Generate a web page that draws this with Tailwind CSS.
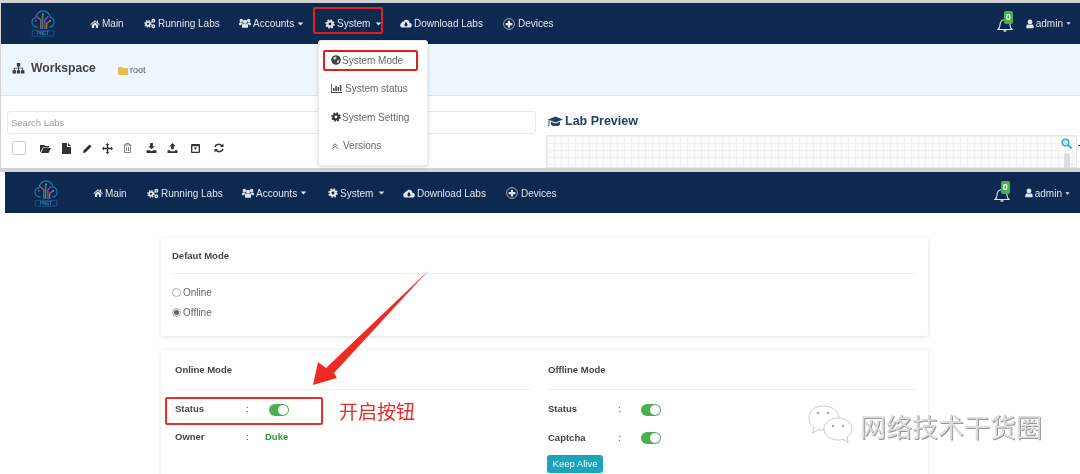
<!DOCTYPE html>
<html>
<head>
<meta charset="utf-8">
<script src="https://cdn.jsdelivr.net/npm/@tailwindcss/browser@4"></script>
</head>
<body class="m-0 bg-white">
<svg width="0" height="0" class="absolute">
  <defs>
    <symbol id="home" viewBox="0 0 16 16"><path fill="currentColor" d="M8 2 L0.500 8.500 L1.500 9.500 L8 4 L14.500 9.500 L15.500 8.500 L13 6.300 V2.500 H11 V4.600 Z M3 9.500 V14.500 H6.500 V10.500 H9.500 V14.500 H13 V9.500 L8 5.300 Z"/></symbol>
    <symbol id="gear" viewBox="0 0 16 16"><circle cx="8" cy="8" r="4" fill="none" stroke="currentColor" stroke-width="3.400"/><circle cx="8" cy="8" r="6.200" fill="none" stroke="currentColor" stroke-width="2.800" stroke-dasharray="2.600 2.270"/></symbol>
    <symbol id="cogs" viewBox="0 0 18 16"><circle cx="6" cy="8.500" r="3" fill="none" stroke="currentColor" stroke-width="2.600"/><circle cx="6" cy="8.500" r="4.800" fill="none" stroke="currentColor" stroke-width="2" stroke-dasharray="2 1.770"/><circle cx="14" cy="4" r="2" fill="none" stroke="currentColor" stroke-width="2"/><circle cx="14" cy="12" r="2" fill="none" stroke="currentColor" stroke-width="2"/></symbol>
    <symbol id="users" viewBox="0 0 18 16"><circle cx="9" cy="5.500" r="3.200" fill="currentColor"/><circle cx="3.500" cy="3.500" r="2.600" fill="currentColor"/><circle cx="14.500" cy="3.500" r="2.600" fill="currentColor"/><path fill="currentColor" d="M4.500 14.500 V10.500 C4.500 9 5.500 8.300 6.500 8.300 C8 9.300 10 9.300 11.500 8.300 C12.500 8.300 13.500 9 13.500 10.500 V14.500 Z M0 9.500 C0 7 1 6 2 6 C3 6.800 4 6.800 5 6.400 C5.200 7.200 5.600 7.800 6 8 C4.500 8.300 3.500 9.300 3.500 10.500 H0.500 Z M18 9.500 C18 7 17 6 16 6 C15 6.800 14 6.800 13 6.400 C12.800 7.200 12.400 7.800 12 8 C13.500 8.300 14.500 9.300 14.500 10.500 H17.500 Z"/></symbol>
    <symbol id="cloud" viewBox="0 0 18 16"><path fill="currentColor" fill-rule="evenodd" d="M4 14 C1.800 14 0.300 12.500 0.300 10.500 C0.300 9 1.200 7.800 2.500 7.300 C2.500 5.500 4 4.500 5.300 5 C6.200 3.200 7.800 2.300 9.500 2.300 C12 2.300 14 4.300 14.200 6.800 C16.200 7 17.700 8.500 17.700 10.500 C17.700 12.500 16.200 14 14 14 Z M7.500 6.500 V9.500 H5.500 L9 13 L12.500 9.500 H10.500 V6.500 Z"/></symbol>
    <symbol id="devices" viewBox="0 0 16 16"><circle cx="8" cy="8" r="7.200" fill="none" stroke="currentColor" stroke-width="0.900"/><path fill="currentColor" d="M6.500 3.500 H9.500 V6.500 H12.500 V9.500 H9.500 V12.500 H6.500 V9.500 H3.500 V6.500 H6.500 Z"/></symbol>
    <symbol id="bell" viewBox="0 0 16 16"><path fill="none" stroke="currentColor" stroke-width="1.100" d="M1 12.500 C2.800 11 3 9.500 3.200 7 C3.400 4.500 5.500 2.800 8 2.800 C10.500 2.800 12.600 4.500 12.800 7 C13 9.500 13.200 11 15 12.500 Z"/><path fill="currentColor" d="M6.300 13.200 H9.700 C9.700 15.300 6.300 15.300 6.300 13.200 Z"/></symbol>
    <symbol id="user" viewBox="0 0 12 14"><circle cx="6" cy="4" r="3.600" fill="currentColor"/><path fill="currentColor" d="M0.500 13.500 V10.500 C0.500 8.800 1.800 7.500 3.200 7.300 C4.800 8.500 7.200 8.500 8.800 7.300 C10.200 7.500 11.500 8.800 11.500 10.500 V13.500 Z"/></symbol>
    <symbol id="logo" viewBox="0 0 26 30">
      <path fill="none" stroke="#177fb0" stroke-width="1.300" d="M7 19 C2.500 19 0.700 16 0.800 13.500 C0.900 10.800 2.800 9 5 9 C5.500 4.500 9 1 13 1 C17 1 20.500 4 21 8 C23.500 8.500 25.300 10.500 25.300 13.500 C25.300 16 23.500 18.500 20 19"/>
      <path fill="none" stroke="#b8437f" stroke-width="1.500" d="M10.500 21 V11 L6 7"/>
      <path fill="none" stroke="#2f9f60" stroke-width="1.500" d="M12.500 21 V6"/>
      <path fill="none" stroke="#7040b0" stroke-width="1.800" d="M15 21 V11 L19 7"/>
      <path fill="none" stroke="#a8752a" stroke-width="1.500" d="M17 21 V15 L21 12"/>
      <circle cx="5" cy="12" r="1" fill="#c9504f"/><circle cx="21" cy="12" r="1" fill="#36a5c8"/><circle cx="13" cy="5" r="1" fill="#36c090"/>
      <rect x="1" y="23" width="24" height="6" fill="none" stroke="#16608f" stroke-width="0.800"/>
      <text x="13" y="28.200" text-anchor="middle" font-size="5" font-family="Liberation Sans" font-weight="bold" fill="#1f86b8">PNET</text>
    </symbol>
    <symbol id="caret" viewBox="0 0 8 5"><path fill="currentColor" d="M0.500 0.500 H7.500 L4 4.500 Z"/></symbol>
  </defs>
</svg>

<div class="relative w-[1080px] h-[474px] overflow-hidden bg-white font-['Liberation_Sans',Arial,sans-serif] blur-[0.45px]">

  <!-- first screenshot -->
  <section class="relative h-[172px] flex flex-col border-t-[3px] border-l border-b-[4px] border-[#d2d2d2] bg-white">
    <nav class="h-[41px] shrink-0 bg-[#0e294f] flex items-center text-[#dfe5ec] text-[10px]">
      <svg class="w-[26px] h-[27px] ml-[29px]"><use href="#logo"/></svg>
      <a class="ml-[34px] w-[54px] flex items-center gap-[2px]"><svg class="w-[10px] h-[10px]"><use href="#home"/></svg>Main</a>
      <a class="w-[95px] flex items-center gap-[2px]"><svg class="w-[12px] h-[11px]"><use href="#cogs"/></svg>Running Labs</a>
      <a class="w-[86px] flex items-center gap-[2px]"><svg class="w-[12px] h-[11px]"><use href="#users"/></svg>Accounts<svg class="w-[7px] h-[4px] ml-[1px]"><use href="#caret"/></svg></a>
      <a class="w-[75px] flex items-center gap-[2px]"><svg class="w-[10px] h-[10px]"><use href="#gear"/></svg>System<svg class="w-[7px] h-[4px] ml-[3px]"><use href="#caret"/></svg></a>
      <a class="w-[103px] flex items-center gap-[2px]"><svg class="w-[12px] h-[11px]"><use href="#cloud"/></svg>Download Labs</a>
      <a class="flex items-center gap-[3px]"><svg class="w-[12px] h-[12px]"><use href="#devices"/></svg>Devices</a>
      <div class="ml-auto mr-[9px] flex items-center">
        <span class="relative block w-[16px] h-[16px] mt-[3px]"><svg class="w-[16px] h-[16px]"><use href="#bell"/></svg><span class="absolute left-[7px] -top-[6px] w-[9px] h-[13px] rounded-[2px] bg-[#4fae4f] text-white text-[9px] font-bold leading-[13px] text-center">0</span></span>
        <svg class="ml-[13px] w-[8px] h-[10px]"><use href="#user"/></svg><span class="ml-[2px]">admin</span><svg class="w-[5px] h-[3px] ml-[3px]"><use href="#caret"/></svg>
      </div>
    </nav>
    <div class="h-[52px] shrink-0 bg-[#eef6fe] border-b border-[#dfe3e6] flex items-center text-[#3c3c3c]">
      <svg class="w-[13px] h-[11px] ml-[11px] -mt-[3px]" viewBox="0 0 14 13"><path fill="#3a3a3a" d="M5 0 H9 V4 H7.500 V5.500 H12.500 V8.500 H14 V12.500 H10 V8.500 H11.500 V6.500 H7.500 V8.500 H9 V12.500 H5 V8.500 H6.500 V6.500 H2.500 V8.500 H4 V12.500 H0 V8.500 H1.500 V5.500 H6.500 V4 H5 Z"/></svg>
      <span class="ml-[6px] w-[66px] text-[12.200px] font-bold -mt-[3px] text-[#444] whitespace-nowrap">Workspace</span>
      <svg class="ml-[21px] w-[10px] h-[8px] mt-[3px]" viewBox="0 0 10 8"><path fill="#e5be4f" d="M0 1 Q0 0 1 0 H4 L5 1 H9 Q10 1 10 2 V7 Q10 8 9 8 H1 Q0 8 0 7 Z"/></svg>
      <span class="ml-[2px] text-[9px] mt-[3px] text-[#555]">root</span>
    </div>
    <div class="flex flex-1 min-h-0">
      <div class="w-[539px] shrink-0 pl-[6px] pt-[15px]">
        <div class="h-[23px] w-[529px] border border-[#e8e8e8] rounded-[3px] bg-white flex items-center pl-[3px] pt-[1px] text-[9.500px] text-[#9a9a9a]">Search Labs</div>
        <div class="flex items-center h-[20px] mt-[4px] text-[#333]">
          <span class="ml-[5px] w-[14px] h-[14px] border border-[#c9c9c9] rounded-[2px] bg-white"></span>
          <svg class="ml-[14px] w-[11px] h-[9px]" viewBox="0 0 11 9"><path fill="currentColor" d="M0 1 H4 L5 2 H9 V3.500 H3 L0.500 8 H0 Z M3.500 4 H11 L8.500 9 H1 Z"/></svg>
          <svg class="ml-[11px] w-[9px] h-[11px]" viewBox="0 0 9 11"><path fill="currentColor" d="M0 0 H5 V4 H9 V11 H0 Z M6 0 L9 3 H6 Z"/></svg>
          <svg class="ml-[12px] w-[9px] h-[9px]" viewBox="0 0 9 9"><path fill="currentColor" d="M6.500 0.500 L8.500 2.500 L2.500 8.500 L0 9 L0.500 6.500 Z"/></svg>
          <svg class="ml-[10px] w-[11px] h-[11px]" viewBox="0 0 11 11"><path fill="currentColor" d="M5.500 0 L7.500 2 H6.200 V4.800 H9 V3.500 L11 5.500 L9 7.500 V6.200 H6.200 V9 H7.500 L5.500 11 L3.500 9 H4.800 V6.200 H2 V7.500 L0 5.500 L2 3.500 V4.800 H4.800 V2 H3.500 Z"/></svg>
          <svg class="ml-[10px] w-[9px] h-[10px]" viewBox="0 0 9 10"><path fill="none" stroke="#666" stroke-width="0.800" d="M0.500 2 H8.500 M3 2 V0.500 H6 V2 M1.500 2 V9.500 H7.500 V2 M3.500 4 V8 M5.500 4 V8"/></svg>
          <svg class="ml-[14px] w-[11px] h-[10px]" viewBox="0 0 11 11"><path fill="currentColor" d="M4 0 H7 V3.500 H9 L5.500 7 L2 3.500 H4 Z M0 8 H3.500 L5.500 9 L7.500 8 H11 V11 H0 Z"/></svg>
          <svg class="ml-[10px] w-[11px] h-[10px]" viewBox="0 0 11 11"><path fill="currentColor" d="M5.500 0 L9 3.500 H7 V7 H4 V3.500 H2 Z M0 8 H3 V9 H8 V8 H11 V11 H0 Z"/></svg>
          <svg class="ml-[13px] w-[9px] h-[9px]" viewBox="0 0 10 10"><path fill="currentColor" fill-rule="evenodd" d="M1 0 H9 Q10 0 10 1 V9 Q10 10 9 10 H1 Q0 10 0 9 V1 Q0 0 1 0 Z M1.500 2.500 V8.500 H8.500 V2.500 Z M3 4 H7 L5 6.500 Z"/></svg>
          <svg class="ml-[14px] w-[10px] h-[10px]" viewBox="0 0 10 10"><path fill="none" stroke="currentColor" stroke-width="1.500" d="M1 4 C1.500 1.500 5.500 0 8 3 M9 6 C8.500 8.500 4.500 10 2 7"/><path fill="currentColor" d="M9.500 0.500 V4 H6 Z M0.500 9.500 V6 H4 Z"/></svg>
        </div>
      </div>
      <div class="relative flex-1 min-w-0 pl-[6px] pt-[16px] overflow-hidden">
        <div class="flex items-center h-[18px] text-[#24406a] text-[12.500px] font-bold pt-[1px]">
          <svg class="ml-[2px] w-[15px] h-[12px]" viewBox="0 0 15 12"><path fill="currentColor" d="M7.500 0.500 L15 3.500 L7.500 6.500 L1.500 4.100 V8 L0.800 10.500 H0 L0.600 8 V3.800 L0 3.500 Z M3 5.800 L7.500 7.500 L12 5.800 V8.500 C12 10.500 3 10.500 3 8.500 Z"/></svg>
          <span class="ml-[2px]">Lab Preview</span>
        </div>
        <div class="relative mt-[5px] w-[531px] h-[33px] border border-[#e8e8e8] bg-[#fbfbfb] bg-[linear-gradient(#f0f0f0_1px,transparent_1px),linear-gradient(90deg,#f0f0f0_1px,transparent_1px)] bg-[length:7px_7px]">
          <svg class="absolute right-[4px] top-[2px] w-[11px] h-[11px]" viewBox="0 0 11 11"><circle cx="4.500" cy="4.500" r="3.300" fill="#bfe6ee" stroke="#39b0c9" stroke-width="1.500"/><path stroke="#39b0c9" stroke-width="2" d="M7 7 L10.500 10.500"/></svg>
          <div class="absolute right-[6px] top-[17px] w-[6px] h-[24px] rounded-[3px] bg-[#dedede]"></div>
        </div>
        <span class="absolute right-0 top-[49px] w-[2px] h-px bg-[#333]"></span>
      </div>
    </div>
    <!-- dropdown -->
    <div class="absolute left-[317px] top-[37px] w-[110px] h-[126px] bg-white rounded-[3px] border border-[#eaeaea] shadow-[0_1px_4px_rgba(0,0,0,0.15)] flex flex-col text-[10px] text-[#666] pt-[5px]">
      <a class="h-[28.500px] flex items-center pl-[12px] gap-[1px]"><svg class="w-[10px] h-[10px]" viewBox="0 0 10 10"><circle cx="5" cy="5" r="4.800" fill="#444"/><path fill="#ccc" d="M2 2.500 L5 1.500 L5.500 3.500 L3.500 5 Z M6 5.500 L8.500 5 L7.500 8 L6 8 Z"/></svg>System Mode</a>
      <a class="h-[28.500px] flex items-center pl-[12px] gap-[3px]"><svg class="w-[11px] h-[9px] text-[#444]" viewBox="0 0 11 9"><path fill="currentColor" d="M0 0 H0.800 V8 H11 V9 H0 Z M2 4 H3.500 V7 H2 Z M4.300 2 H5.800 V7 H4.300 Z M6.600 3 H8 V7 H6.600 Z M8.800 1 H10.300 V7 H8.800 Z"/></svg>System status</a>
      <a class="h-[28.500px] flex items-center pl-[12px] gap-[1px]"><svg class="w-[10px] h-[10px] text-[#333]"><use href="#gear"/></svg>System Setting</a>
      <a class="h-[28.500px] flex items-center pl-[13px] gap-[5px]"><svg class="w-[6px] h-[6px]" viewBox="0 0 6 6"><path fill="none" stroke="#666" d="M0.500 3 L3 0.800 L5.500 3 M0.500 5.500 L3 3.300 L5.500 5.500"/></svg>Versions</a>
    </div>
    <div class="absolute left-[312px] top-[4px] w-[70px] h-[27px] border-2 border-[#e0201b] rounded-[2px]"></div>
    <div class="absolute left-[322px] top-[47px] w-[95px] h-[21px] border-2 border-[#e0201b] rounded-[2px]"></div>
  </section>

  <!-- second screenshot -->
  <nav class="ml-[5px] h-[41px] pt-[1px] bg-[#0e294f] flex items-center text-[#dfe5ec] text-[10px]">
    <svg class="w-[26px] h-[27px] ml-[28px]"><use href="#logo"/></svg>
    <a class="ml-[34px] w-[54px] flex items-center gap-[2px]"><svg class="w-[10px] h-[10px]"><use href="#home"/></svg>Main</a>
    <a class="w-[95px] flex items-center gap-[2px]"><svg class="w-[12px] h-[11px]"><use href="#cogs"/></svg>Running Labs</a>
    <a class="w-[86px] flex items-center gap-[2px]"><svg class="w-[12px] h-[11px]"><use href="#users"/></svg>Accounts<svg class="w-[7px] h-[4px] ml-[1px]"><use href="#caret"/></svg></a>
    <a class="w-[75px] flex items-center gap-[2px]"><svg class="w-[10px] h-[10px]"><use href="#gear"/></svg>System<svg class="w-[7px] h-[4px] ml-[3px]"><use href="#caret"/></svg></a>
    <a class="w-[103px] flex items-center gap-[2px]"><svg class="w-[12px] h-[11px]"><use href="#cloud"/></svg>Download Labs</a>
    <a class="flex items-center gap-[3px]"><svg class="w-[12px] h-[12px]"><use href="#devices"/></svg>Devices</a>
    <div class="ml-auto mr-[10px] flex items-center">
      <span class="relative block w-[16px] h-[16px] mt-[3px]"><svg class="w-[16px] h-[16px]"><use href="#bell"/></svg><span class="absolute left-[7px] -top-[6px] w-[9px] h-[13px] rounded-[2px] bg-[#4fae4f] text-white text-[9px] font-bold leading-[13px] text-center">0</span></span>
      <svg class="ml-[15px] w-[8px] h-[10px]"><use href="#user"/></svg><span class="ml-[2px]">admin</span><svg class="w-[5px] h-[3px] ml-[3px]"><use href="#caret"/></svg>
    </div>
  </nav>

  <main class="pt-[25px] text-[9.500px] text-[#444]">
    <section class="ml-[161px] w-[767px] h-[98px] bg-white rounded-[2px] shadow-[0_1px_4px_rgba(0,0,0,0.13)] px-[11px]">
      <h2 class="h-[36px] pt-[1px] flex items-center font-bold border-b border-[#eeeeee] text-[#444]">Defaut Mode</h2>
      <label class="mt-[8px] h-[20px] flex items-center gap-[2px] text-[#666] text-[10px]"><span class="w-[9px] h-[9px] rounded-full border border-[#aaa] bg-white"></span>Online</label>
      <label class="h-[20px] flex items-center gap-[2px] text-[#666] text-[10px]"><span class="w-[9px] h-[9px] rounded-full border border-[#aaa] bg-[#eee] flex items-center justify-center"><span class="w-[5px] h-[5px] rounded-full bg-[#666]"></span></span>Offline</label>
    </section>
    <section class="mt-[14px] ml-[161px] w-[767px] h-[140px] bg-white rounded-[2px] shadow-[0_0_4px_rgba(0,0,0,0.12)] flex pl-[14px] pr-[11px] font-bold">
      <div class="w-[372px] shrink-0">
        <h2 class="w-[355px] h-[40px] pt-[1px] flex items-center border-b border-[#eeeeee]">Online Mode</h2>
        <div class="h-[39px] flex items-center"><span class="w-[71px]">Status</span><span class="w-[23px] font-normal">:</span><span class="flex items-center w-[20px] h-[12px] rounded-full bg-[#4caf50] justify-end pr-[1px]"><span class="w-[10px] h-[10px] rounded-full bg-white"></span></span></div>
        <div class="h-[16px] flex items-center"><span class="w-[71px]">Owner</span><span class="w-[19px] font-normal">:</span><span class="text-[#2e9a2e]">Duke</span></div>
      </div>
      <div class="flex-1">
        <h2 class="h-[40px] pt-[1px] pl-[1px] flex items-center border-b border-[#eeeeee]">Offline Mode</h2>
        <div class="h-[39px] pl-[1px] flex items-center"><span class="w-[70px]">Status</span><span class="w-[23px] font-normal">:</span><span class="flex items-center w-[20px] h-[12px] rounded-full bg-[#4caf50] justify-end pr-[1px]"><span class="w-[10px] h-[10px] rounded-full bg-white"></span></span></div>
        <div class="h-[18px] pl-[1px] flex items-center"><span class="w-[70px]">Captcha</span><span class="w-[23px] font-normal">:</span><span class="flex items-center w-[20px] h-[12px] rounded-full bg-[#4caf50] justify-end pr-[1px]"><span class="w-[10px] h-[10px] rounded-full bg-white"></span></span></div>
        <button class="mt-[8px] w-[56px] h-[18px] rounded-[3px] bg-[#1ba5bd] text-[#e8fafd] font-normal text-[9.500px] flex items-center justify-center">Keep Alive</button>
      </div>
    </section>
  </main>

  <!-- annotations -->
  <div class="absolute left-[165px] top-[397px] w-[158px] h-[28px] border-2 border-[#e8302a] rounded-[2px]"></div>
  <span class="absolute left-[339px] top-[400px] text-[19px] leading-[22px] text-[#ee2a24] font-['Noto_Sans_CJK_SC',sans-serif]">开启按钮</span>
  <svg class="absolute left-[310px] top-[268px] w-[122px] h-[122px]" viewBox="0 0 122 122"><path fill="#ee2a24" d="M118 3 L16 100 L8 94 L3 117 L27 110 L24 105 Z"/></svg>
  <svg class="absolute left-[808px] top-[405px] w-[46px] h-[40px]" viewBox="0 0 46 40"><path fill="#fff" stroke="#c4c4c4" stroke-width="0.900" d="M15 1 C7 1 1 6 1 13 C1 17 3 20 6 22 L4.500 28 L11 24.500 C13 25 15 25 17 25 C26 25 31 19 31 13 C31 6 24 1 15 1 Z"/><path fill="#fff" stroke="#c4c4c4" stroke-width="0.900" d="M30 13 C22 13 16 18 16 24 C16 30 22 35 30 35 C32 35 33.500 34.800 35 34.300 L40 37.500 L39 32 C42 30 44 27.500 44 24 C44 18 38 13 30 13 Z"/><circle cx="10" cy="8" r="1.300" fill="#aaa"/><circle cx="20" cy="8" r="1.300" fill="#aaa"/><circle cx="25" cy="21" r="1.300" fill="#aaa"/><circle cx="35" cy="21" r="1.300" fill="#aaa"/></svg>
  <span class="absolute left-[860px] top-[411px] text-[26px] leading-[30px] text-[#dcdcdc] [text-shadow:1px_1px_0_#999999] font-['Noto_Sans_CJK_SC',sans-serif]">网络技术干货圈</span>
</div>
</body>
</html>
